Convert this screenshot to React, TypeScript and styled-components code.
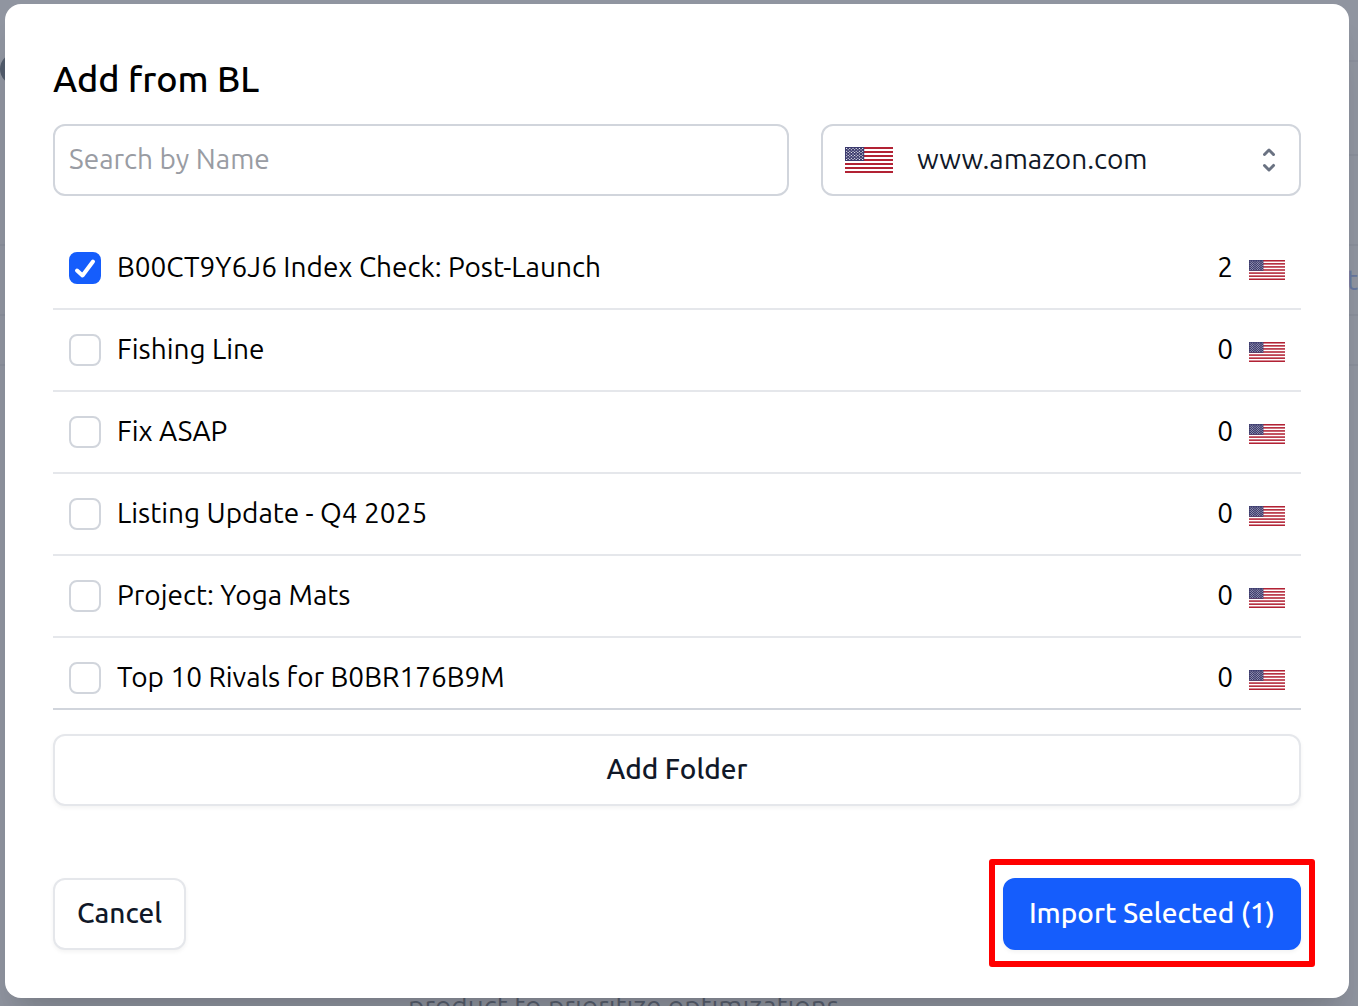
import React, { useId, useState } from 'react';
import styled, { createGlobalStyle } from 'styled-components';

const GlobalStyle = createGlobalStyle`
  *, *::before, *::after { box-sizing: border-box; }
  body {
    margin: 0;
    background: #fff;
    color: #000;
    font-family: Ubuntu, "Open Sans", "Noto Sans", sans-serif;
    font-size: 28px;
    line-height: 40px;
  }
  button, input, select { font: inherit; }
`;

const Screen = styled.div`
  position: relative;
  display: flex;
  min-height: 100vh;
  padding: 4px 9px 8px 5px;
  overflow: hidden;
`;

const Page = styled.div`
  position: absolute;
  inset: 0;
  display: flex;
  flex-direction: column;
  overflow: hidden;
`;

const PageBand = styled.div<{ $height: number; $inset?: boolean }>`
  flex: none;
  display: flex;
  align-items: center;
  justify-content: flex-end;
  height: ${p => p.$height}px;
  margin-left: ${p => (p.$inset ? 24 : 0)}px;
  border-bottom: 2px solid #e5e7eb;
  color: #5b8bfc;
`;

const PageNote = styled.p`
  margin: auto 0 -20px 408px;
  color: #1e2939;
`;

const Avatar = styled.span`
  position: absolute;
  top: 53px;
  left: 0;
  width: 32px;
  height: 32px;
  border-radius: 50%;
  background: #0a1c30;
`;

const Backdrop = styled.div`
  position: absolute;
  inset: 0;
  background: rgba(107, 114, 128, 0.75);
`;

const Dialog = styled.section`
  position: relative;
  flex: 1;
  min-width: 0;
  padding: 48px;
  border-radius: 16px;
  background: #fff;
  box-shadow: 0 40px 50px -10px rgba(0, 0, 0, 0.1), 0 16px 20px -12px rgba(0, 0, 0, 0.1);
`;

const Title = styled.h2`
  margin: 0 0 18px;
  font-size: 36px;
  line-height: 54px;
  font-weight: 500;
`;

const Filters = styled.div`
  display: grid;
  grid-template-columns: minmax(0, 1fr) 480px;
  gap: 32px;
`;

const SearchInput = styled.input`
  width: 100%;
  height: 72px;
  padding: 0 14px 4px;
  border: 2px solid #d1d5dc;
  border-radius: 12px;
  background: #fff;
  &::placeholder { color: #999ca3; opacity: 1; }
`;

const SelectWrap = styled.div`
  position: relative;
`;

const Select = styled.select`
  appearance: none;
  width: 100%;
  height: 72px;
  padding: 0 64px 2px 94px;
  border: 2px solid #d1d5dc;
  border-radius: 12px;
  background: #fff;
  color: #101828;
`;

const SelectFlag = styled.span`
  position: absolute;
  top: 0;
  bottom: 0;
  left: 24px;
  display: flex;
  align-items: center;
  pointer-events: none;
`;

const SelectArrows = styled.svg`
  position: absolute;
  top: 20px;
  right: 16px;
  width: 32px;
  height: 32px;
  fill: #6a7282;
  pointer-events: none;
`;

const FolderList = styled.ul`
  height: 482px;
  margin: 32px 0 24px;
  padding: 0;
  border-bottom: 2px solid #d1d5dc;
  list-style: none;
  overflow-y: auto;
  scrollbar-width: none;
`;

const FolderRow = styled.li`
  display: flex;
  align-items: center;
  gap: 16px;
  height: 82px;
  padding: 0 16px;
  border-bottom: 2px solid #e5e7eb;
  &:last-child { border-bottom: 0; height: 80px; }
`;

const FolderName = styled.label`
  flex: 1;
  min-width: 0;
  padding-bottom: 2px;
`;

const FolderCount = styled.span`
  padding-bottom: 2px;
`;

const CheckboxCell = styled.span`
  display: grid;
  > * { grid-area: 1 / 1; }
`;

const Checkbox = styled.input`
  appearance: none;
  width: 32px;
  height: 32px;
  margin: 0;
  border: 2px solid #d1d5dc;
  border-radius: 8px;
  background: #fff;
  &:checked { border-color: #155dfc; background: #155dfc; }
`;

const CheckMark = styled.svg`
  width: 32px;
  height: 32px;
  fill: none;
  stroke: #fff;
  stroke-width: 4;
  stroke-linecap: round;
  stroke-linejoin: round;
  pointer-events: none;
`;

const FlagSlot = styled.span`
  display: flex;
  padding-top: 4px;
`;

const Button = styled.button<{ $primary?: boolean; $block?: boolean }>`
  display: block;
  width: ${p => (p.$block ? '100%' : 'auto')};
  height: 72px;
  padding: 0 ${p => (p.$primary ? 24 : 22)}px 2px;
  border: 2px solid ${p => (p.$primary ? '#155dfc' : '#e5e7eb')};
  border-radius: 12px;
  background: ${p => (p.$primary ? '#155dfc' : '#fff')};
  color: ${p => (p.$primary ? '#fff' : '#101828')};
  font-weight: 500;
  box-shadow: 0 2px 4px rgba(0, 0, 0, 0.05);
`;

const Footer = styled.footer`
  display: flex;
  justify-content: space-between;
  margin-top: 72px;
`;

const Highlight = styled.div`
  position: relative;
  &::after {
    content: '';
    position: absolute;
    inset: -19px -14px -17px;
    border: 6px solid #f00;
    border-radius: 3px;
    pointer-events: none;
  }
`;

function Flag({ width, height }: { width: number; height: number }) {
  const clip = useId();
  const stars: React.ReactNode[] = [];
  for (let row = 0; row < 9; row++) {
    const count = row % 2 ? 5 : 6;
    for (let col = 0; col < count; col++) {
      const x = (row % 2 ? 12.7 : 6.3) + col * 12.7;
      stars.push(<circle key={`${row}-${col}`} cx={x} cy={7 + row * 7} r="2.6" />);
    }
  }
  return (
    <svg width={width} height={height} viewBox="0 0 190 130" preserveAspectRatio="none" role="img" aria-label="United States">
      <clipPath id={clip}><rect width="190" height="130" /></clipPath>
      <g clipPath={`url(#${clip})`}>
        <rect width="190" height="130" fill="#fff" />
        {[0, 1, 2, 3, 4, 5, 6].map(i => (
          <rect key={i} y={i * 20} width="190" height="10" fill="#b22234" />
        ))}
        <rect width="76" height="70" fill="#3c3b6e" />
        <g fill="#fff">{stars}</g>
      </g>
    </svg>
  );
}

const folders = [
  { name: 'B00CT9Y6J6 Index Check: Post-Launch', count: 2 },
  { name: 'Fishing Line', count: 0 },
  { name: 'Fix ASAP', count: 0 },
  { name: 'Listing Update - Q4 2025', count: 0 },
  { name: 'Project: Yoga Mats', count: 0 },
  { name: 'Top 10 Rivals for B0BR176B9M', count: 0 },
];

export default function App() {
  const [selected, setSelected] = useState<number[]>([0]);
  const toggle = (i: number) =>
    setSelected(s => (s.includes(i) ? s.filter(n => n !== i) : [...s, i]));

  return (
    <>
      <GlobalStyle />
      <Screen>
        <Page aria-hidden="true">
          <PageBand $height={62} $inset />
          <PageBand $height={94} $inset />
          <PageBand $height={90} />
          <PageBand $height={70}>t</PageBand>
          <PageBand $height={50} />
          <PageNote>product to prioritize optimizations</PageNote>
          <Avatar />
        </Page>
        <Backdrop />
        <Dialog role="dialog" aria-labelledby="dialog-title">
          <Title id="dialog-title">Add from BL</Title>
          <Filters>
            <SearchInput type="text" placeholder="Search by Name" aria-label="Search by Name" />
            <SelectWrap>
              <Select aria-label="Marketplace" defaultValue="us">
                <option value="us">www.amazon.com</option>
              </Select>
              <SelectFlag><Flag width={48} height={26} /></SelectFlag>
              <SelectArrows viewBox="0 0 16 16" aria-hidden="true">
                <path d="M5.22 10.22a.75.75 0 0 1 1.06 0L8 11.94l1.72-1.72a.75.75 0 1 1 1.06 1.06l-2.25 2.25a.75.75 0 0 1-1.06 0l-2.25-2.25a.75.75 0 0 1 0-1.06ZM10.78 5.78a.75.75 0 0 1-1.06 0L8 4.06 6.28 5.78a.75.75 0 0 1-1.06-1.06l2.25-2.25a.75.75 0 0 1 1.06 0l2.25 2.25a.75.75 0 0 1 0 1.06Z" />
              </SelectArrows>
            </SelectWrap>
          </Filters>
          <FolderList>
            {folders.map((folder, i) => (
              <FolderRow key={folder.name}>
                <CheckboxCell>
                  <Checkbox
                    type="checkbox"
                    id={`folder-${i}`}
                    checked={selected.includes(i)}
                    onChange={() => toggle(i)}
                  />
                  {selected.includes(i) && (
                    <CheckMark viewBox="0 0 32 32" aria-hidden="true">
                      <path d="M8 18.5 13.5 23.5 24 9.5" />
                    </CheckMark>
                  )}
                </CheckboxCell>
                <FolderName htmlFor={`folder-${i}`}>{folder.name}</FolderName>
                <FolderCount>{folder.count}</FolderCount>
                <FlagSlot><Flag width={36} height={20} /></FlagSlot>
              </FolderRow>
            ))}
          </FolderList>
          <Button type="button" $block>Add Folder</Button>
          <Footer>
            <Button type="button">Cancel</Button>
            <Highlight>
              <Button type="button" $primary>Import Selected ({selected.length})</Button>
            </Highlight>
          </Footer>
        </Dialog>
      </Screen>
    </>
  );
}
